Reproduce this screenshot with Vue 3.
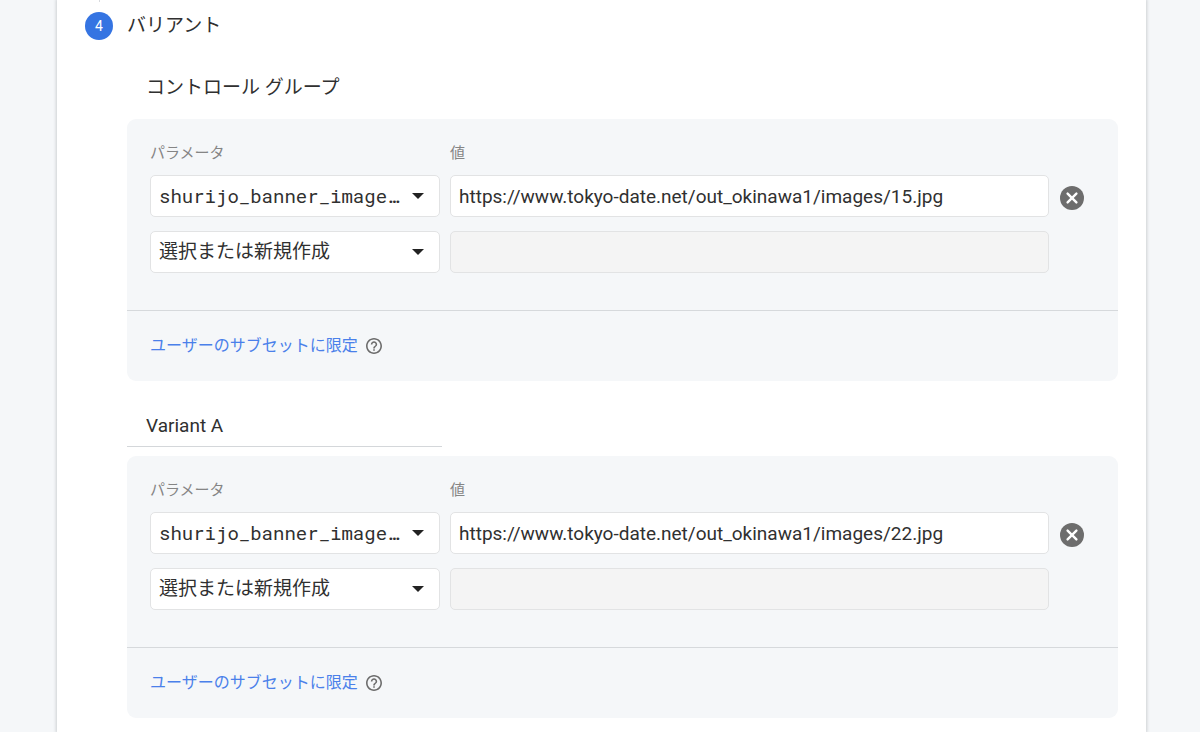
<script setup>
import { ref } from 'vue'

const groups = ref([
  {
    id: 'control',
    name: 'コントロール グループ',
    editable: false,
    parameter: 'shurijo_banner_image…',
    value: 'https://www.tokyo-date.net/out_okinawa1/images/15.jpg',
  },
  {
    id: 'variant-a',
    name: 'Variant A',
    editable: true,
    parameter: 'shurijo_banner_image…',
    value: 'https://www.tokyo-date.net/out_okinawa1/images/22.jpg',
  },
])
</script>

<template>
  <main class="page">
    <div class="card">
      <header class="step">
        <div class="marker">
          <span class="line"></span>
          <span class="number">4</span>
        </div>
        <h1 class="step-title">バリアント</h1>
      </header>

      <section v-for="group in groups" :key="group.id" class="group">
        <input
          v-if="group.editable"
          v-model="group.name"
          class="name-input"
          type="text"
          aria-label="バリアント名"
        />
        <h2 v-else class="name">{{ group.name }}</h2>

        <div class="panel">
          <div class="fields">
            <label class="label" :for="group.id + '-param'">パラメータ</label>
            <label class="label value-label" :for="group.id + '-value'">値</label>

            <div class="select">
              <select :id="group.id + '-param'" class="control mono">
                <option>{{ group.parameter }}</option>
              </select>
              <svg class="arrow" viewBox="0 0 12 6" aria-hidden="true"><path d="M0 0h12L6 6z" /></svg>
            </div>
            <input :id="group.id + '-value'" v-model="group.value" class="control" type="text" />
            <button class="remove" type="button" aria-label="削除">
              <svg viewBox="0 0 24 24" aria-hidden="true">
                <circle cx="12" cy="12" r="12" fill="#6d6d6d" />
                <path d="M7.6 7.6l8.800 8.800M16.400 7.600l-8.800 8.800" stroke="#fff" stroke-width="2.4" stroke-linecap="round" />
              </svg>
            </button>

            <div class="select second">
              <select class="control" aria-label="パラメータ">
                <option>選択または新規作成</option>
              </select>
              <svg class="arrow" viewBox="0 0 12 6" aria-hidden="true"><path d="M0 0h12L6 6z" /></svg>
            </div>
            <input class="control second" type="text" aria-label="値" disabled />
          </div>

          <footer class="subset">
            <a href="#" class="link">ユーザーのサブセットに限定</a>
            <button class="help" type="button" aria-label="ヘルプ">
              <svg viewBox="2 2 20 20" aria-hidden="true">
                <path
                  fill="#6d6d6d"
                  d="M11 18h2v-2h-2v2zm1-16C6.48 2 2 6.48 2 12s4.48 10 10 10 10-4.48 10-10S17.52 2 12 2zm0 18c-4.41 0-8-3.59-8-8s3.59-8 8-8 8 3.59 8 8-3.59 8-8 8zm0-14c-2.21 0-4 1.79-4 4h2c0-1.100.900-2 2-2s2 .900 2 2c0 2-3 1.750-3 5h2c0-2.250 3-2.500 3-5 0-2.210-1.790-4-4-4z"
                />
              </svg>
            </button>
          </footer>
        </div>
      </section>
    </div>
  </main>
</template>

<style>
body {
  background: #f5f7f9;
}
</style>

<style scoped>
.page {
  height: 100vh;
  overflow: hidden;
  padding: 0 54px 0 57px;
  color: #303030;
  font-family: Roboto, 'Noto Sans CJK JP', sans-serif;
  font-size: 19px;
  line-height: 28px;
}

.page,
.page * {
  box-sizing: border-box;
}

.card {
  min-height: 100%;
  padding: 0 28px;
  background: #fff;
  box-shadow: 0 0 3px 1px #cdd0d3;
}

.step {
  display: flex;
  gap: 14px;
}

.marker {
  display: flex;
  flex-direction: column;
  align-items: center;
  gap: 10px;
}

.line {
  width: 1px;
  height: 2px;
  background: #d8dade;
}

.number {
  width: 28px;
  height: 28px;
  border-radius: 50%;
  background: #3574e2;
  color: #fff;
  font-size: 14px;
  text-align: center;
}

.step-title,
.name {
  margin: 0;
  font-size: 19px;
  font-weight: 400;
}

.step-title {
  padding-top: 12px;
}

.group {
  margin-left: 42px;
}

.name {
  padding: 34px 19px 17px;
}

.name-input {
  display: block;
  width: 315px;
  height: 42px;
  margin: 24px 0 9px;
  padding: 0 19px;
  border: 0;
  border-bottom: 1px solid #d4d7da;
  outline: 0;
  background: transparent;
  color: #303030;
  font: inherit;
}

.panel {
  border-radius: 9px;
  background: #f5f7f9;
}

.fields {
  display: grid;
  grid-template-columns: 290px 1fr 25px;
  column-gap: 10px;
  align-items: center;
  padding: 22px 34px 37px 23px;
}

.label {
  color: #858585;
  font-size: 15px;
  line-height: 24px;
  margin-bottom: 10px;
}

.value-label {
  grid-column: 2 / 4;
}

.select {
  position: relative;
}

.control {
  display: block;
  width: 100%;
  height: 42px;
  margin: 0;
  padding: 0 8px;
  border: 1px solid #e2e3e4;
  border-radius: 5px;
  outline: 0;
  appearance: none;
  background: #fff;
  color: #303030;
  font: inherit;
}

.control:disabled {
  background: #f4f4f4;
}

.control.mono {
  font-family: 'Roboto Mono', 'DejaVu Sans Mono', 'Liberation Mono', monospace;
}

.second,
.control.second {
  margin-top: 14px;
}

.arrow {
  position: absolute;
  top: 18px;
  right: 16px;
  width: 12px;
  height: 6px;
  fill: #222;
  pointer-events: none;
}

.remove,
.help {
  display: block;
  padding: 0;
  border: 0;
  background: none;
}

.remove {
  justify-self: end;
  width: 24px;
  height: 28px;
  padding-top: 4px;
}

.help {
  width: 16px;
  height: 16px;
}

.remove svg,
.help svg {
  display: block;
  width: 100%;
  height: 100%;
}

.subset {
  display: flex;
  align-items: center;
  gap: 8px;
  height: 71px;
  padding: 0 23px;
  border-top: 1px solid #d6d9dc;
}

.link {
  color: #4a80ea;
  font-size: 16px;
  text-decoration: none;
}
</style>
